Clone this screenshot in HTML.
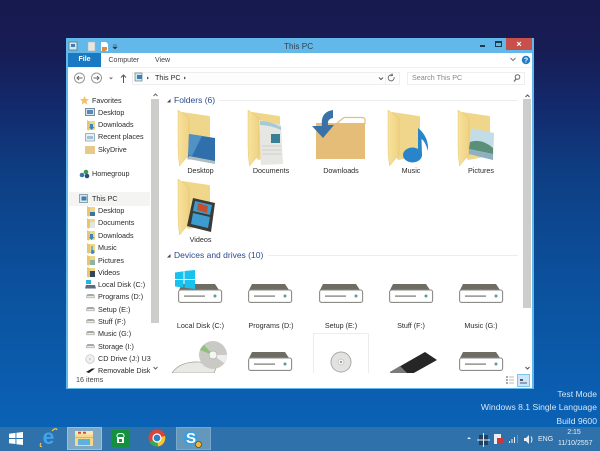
<!DOCTYPE html>
<html><head><meta charset="utf-8"><style>
*{box-sizing:border-box}
html,body{margin:0;padding:0}
body{width:600px;height:450px;overflow:hidden;position:relative;font-family:"Liberation Sans",sans-serif;background:linear-gradient(180deg,#171a4e 0,#171c54 50px,#13286a 100px,#0e3d82 170px,#0c4a94 240px,#0b539f 300px,#0b5cae 380px,#0a62b5 426px)}
.a{position:absolute}
.t{position:absolute;white-space:nowrap;line-height:10px;height:10px}
.s{font-size:7.2px;color:#2a2a2a}
.c{font-size:7.2px;color:#2a2a2a;width:70px;text-align:center}
.h{font-size:8.5px;color:#2b4a8c}
svg{position:absolute;overflow:visible}
</style></head><body>
<svg width="0" height="0" style="position:absolute"><defs>
<linearGradient id="fl" x1="0" y1="0" x2="1" y2="0"><stop offset="0" stop-color="#f8e29c"/><stop offset="1" stop-color="#efd285"/></linearGradient>
<symbol id="fol" viewBox="0 0 38 57" overflow="visible">
<path d="M4 2 L31 6 Q32 6 32 8 L32 46 L10 50 L4 40Z" fill="#f0d68a"/>
<path d="M0 0 L11 8 L11 45 L9 47 L1.500 56 Q0 46 0 36Z" fill="url(#fl)" stroke="#e0be62" stroke-width=".4"/>
</symbol>
<symbol id="drv" viewBox="0 0 44 19" overflow="visible">
<path d="M4 0H37L41 6H1Z" fill="#6f6c64"/>
<rect x=".6" y="6" width="43" height="12.4" rx="2" fill="#fff" stroke="#8b8b88" stroke-width="1.1"/>
<rect x="6" y="11.5" width="21" height="1.2" fill="#77776f"/>
<circle cx="37" cy="12" r="1.5" fill="#5d9c90"/>
</symbol>
<symbol id="nf" viewBox="0 0 10 11" overflow="visible">
<rect x="1" y="1" width="8" height="9" fill="#f0d68a"/><path d="M1 0L4 2V9L2 11 1 9Z" fill="#e9c768"/>
</symbol>
<symbol id="nd" viewBox="0 0 10 6" overflow="visible">
<path d="M1.5 0H8.5L10 2V5H0V2Z" fill="#a9a9a5"/><rect x="1" y="2.5" width="8" height="1.6" fill="#eee"/>
</symbol>
</defs></svg>

<!-- window -->
<div class="a" style="left:66px;top:38px;width:468px;height:351px;background:#62b8e8"></div>
<div class="a" style="left:68px;top:53px;width:464px;height:335px;background:#fff"></div>

<!-- titlebar -->
<svg style="left:69px;top:41px" width="50" height="11">
<rect x="0" y="1" width="8" height="8" fill="#d5e6ee" stroke="#5a7a8a" stroke-width=".8"/><rect x="2" y="3" width="4" height="3" fill="#3d7fb0"/>
<rect x="19" y="1" width="7" height="9" fill="#e6e6e2" stroke="#a9b7bd" stroke-width=".5"/>
<path d="M32 1h5l2 2v7h-7z" fill="#fff"/><path d="M33 6h5v3l-2 1h-3z" fill="#e08a3c"/>
<path d="M44 4h4M44 6l2 2 2-2z" fill="#333" stroke="#333" stroke-width=".6"/>
</svg>
<div class="t" style="left:284px;top:40.5px;font-size:8.2px;color:#31414d;line-height:12px;height:12px">This PC</div>
<div class="a" style="left:480px;top:44.5px;width:5px;height:2px;background:#1d3c50"></div>
<div class="a" style="left:495px;top:41px;width:7px;height:6px;border:1px solid #1d3c50;border-top-width:2px"></div>
<div class="a" style="left:506px;top:38px;width:26px;height:12px;background:#c8504b"></div>
<div class="t" style="left:506px;top:39px;width:26px;text-align:center;color:#fff;font-size:9px;font-weight:bold">×</div>

<!-- ribbon -->
<div class="a" style="left:68px;top:53px;width:33px;height:14px;background:#1979c2"></div>
<div class="t" style="left:68px;top:55px;width:33px;text-align:center;color:#fff;font-size:7px;font-weight:bold">File</div>
<div class="t" style="left:108.5px;top:56px;font-size:7px;color:#444">Computer</div>
<div class="t" style="left:155px;top:56px;font-size:7px;color:#444">View</div>
<svg style="left:508px;top:53px" width="24" height="14">
<path d="M2.500 5l2.500 2.500L7.500 5" fill="none" stroke="#777" stroke-width="1"/>
<circle cx="18" cy="7" r="4.200" fill="#1d7fc8"/><text x="18" y="9.500" font-size="7" fill="#fff" text-anchor="middle" font-weight="bold" font-family="Liberation Sans">?</text>
</svg>
<div class="a" style="left:68px;top:67px;width:464px;height:1px;background:#f0f0f0"></div>

<!-- nav -->
<svg style="left:73px;top:72px" width="60" height="14">
<circle cx="6.500" cy="6" r="5" fill="#fff" stroke="#999"/><path d="M9.500 6H4M6 4L4 6l2 2" fill="none" stroke="#666"/>
<circle cx="23.500" cy="6" r="5" fill="#fff" stroke="#999"/><path d="M20.500 6H26M24 4l2 2-2 2" fill="none" stroke="#666"/>
<path d="M36 5.500h4l-2 2z" fill="#777"/>
<path d="M50.500 11V3M48 5.500l2.500-2.500L53 5.500" fill="none" stroke="#555"/>
</svg>
<div class="a" style="left:132px;top:72px;width:268px;height:13px;border:1px solid #eeeeee;background:#fdfdfd"></div>
<svg style="left:134px;top:72px" width="60" height="12">
<rect x="1" y="1" width="7" height="8" fill="#d9e7ee" stroke="#62808f" stroke-width=".7"/><rect x="3" y="3" width="5" height="4" fill="#3d7fb0"/>
<path d="M13 4.500l2 1.500-2 1.500z" fill="#555"/>
<path d="M50 4.500l2 1.500-2 1.500z" fill="#555"/>
</svg>
<div class="t s" style="left:155px;top:73px">This PC</div>
<svg style="left:375px;top:72px" width="24" height="12">
<path d="M4 5.500l2 2 2-2" fill="none" stroke="#555" stroke-width="1"/>
<path d="M10.500 0V12" stroke="#eee"/>
<path d="M19 5a3 3 0 1 1-1.500-1.800M17 1.500l.5 2-2 .3" fill="none" stroke="#666" stroke-width=".9"/>
</svg>
<div class="a" style="left:407px;top:72px;width:118px;height:13px;border:1px solid #eeeeee;background:#fff"></div>
<div class="t s" style="left:412px;top:73px;color:#888">Search This PC</div>
<svg style="left:512px;top:73px" width="10" height="10"><circle cx="5.500" cy="4" r="2.300" fill="none" stroke="#666"/><path d="M4 6L2 8.500" stroke="#666" stroke-width="1.300"/></svg>

<!-- sidebar -->
<svg style="left:80px;top:96px" width="9" height="9"><path d="M4.500 0l1.300 3 3.200.3-2.400 2.100.7 3.200-2.800-1.700L1.700 8.600l.7-3.200L0 3.300 3.200 3z" fill="#eec36c"/></svg>
<div class="t s" style="left:92px;top:96px">Favorites</div>
<svg style="left:85px;top:108px" width="10" height="9"><rect x=".5" y=".5" width="9" height="7" fill="#d9e5ee" stroke="#7b8c9c"/><rect x="2" y="2" width="6" height="4" fill="#5b88b5"/></svg>
<div class="t s" style="left:98px;top:108px">Desktop</div>
<svg style="left:86px;top:120px" width="10" height="11"><use href="#nf" width="10" height="11"/><path d="M4 4h3v3h1.500L5.500 10 3 7h1z" fill="#3a86c4"/></svg>
<div class="t s" style="left:98px;top:120px">Downloads</div>
<svg style="left:85px;top:132px" width="11" height="10"><rect x=".5" y="1.500" width="9" height="7.500" fill="#e7eff3" stroke="#7c9aa9" stroke-width=".7"/><rect x="2" y="4" width="6" height="3" fill="#9cc2d6"/></svg>
<div class="t s" style="left:98px;top:132px">Recent places</div>
<div class="a" style="left:85px;top:146px;width:10px;height:8px;background:#e7c98c"></div>
<div class="t s" style="left:98px;top:145px">SkyDrive</div>
<svg style="left:79px;top:169px" width="11" height="10"><circle cx="3" cy="6" r="2.300" fill="#3678a8"/><circle cx="7" cy="3" r="2.300" fill="#3f9850"/><circle cx="8" cy="7" r="2.300" fill="#274f7e"/></svg>
<div class="t s" style="left:92px;top:169px">Homegroup</div>
<div class="a" style="left:69px;top:192px;width:81px;height:14px;background:#f4f4f2"></div>
<svg style="left:79px;top:194px" width="11" height="10"><rect x=".5" y=".5" width="8" height="8" fill="#dce8ee" stroke="#678595" stroke-width=".7"/><rect x="2.500" y="2.500" width="5" height="4" fill="#3d7fb0"/></svg>
<div class="t s" style="left:92px;top:194px">This PC</div>

<svg style="left:86px;top:206px" width="10" height="11"><use href="#nf" width="10" height="11"/><rect x="4" y="6" width="5" height="4" fill="#3b73a8"/></svg>
<div class="t s" style="left:98px;top:206px">Desktop</div>
<svg style="left:86px;top:218px" width="10" height="11"><use href="#nf" width="10" height="11"/><rect x="4" y="4" width="5" height="6" fill="#e4e4e0"/></svg>
<div class="t s" style="left:98px;top:218px">Documents</div>
<svg style="left:86px;top:230px" width="10" height="11"><use href="#nf" width="10" height="11"/><path d="M4 4h3v3h1.500L5.500 10 3 7h1z" fill="#3a86c4"/></svg>
<div class="t s" style="left:98px;top:231px">Downloads</div>
<svg style="left:86px;top:243px" width="10" height="11"><use href="#nf" width="10" height="11"/><path d="M5 9a1.500 1.500 0 1 0 1-1.500V3" fill="#2d8ed0" stroke="#2d8ed0"/></svg>
<div class="t s" style="left:98px;top:243px">Music</div>
<svg style="left:86px;top:255px" width="10" height="11"><use href="#nf" width="10" height="11"/><rect x="4" y="5" width="5" height="5" fill="#8fb4a4"/></svg>
<div class="t s" style="left:98px;top:256px">Pictures</div>
<svg style="left:86px;top:267px" width="10" height="11"><use href="#nf" width="10" height="11"/><rect x="4" y="4" width="5" height="6" fill="#33475a"/></svg>
<div class="t s" style="left:98px;top:268px">Videos</div>
<svg style="left:85px;top:279px" width="11" height="11"><path d="M1 1h5v4H1z" fill="#24b4dc"/><path d="M1 6h9l1 3.500H0z" fill="#5b6d80"/></svg>
<div class="t s" style="left:98px;top:280px">Local Disk (C:)</div>
<svg style="left:86px;top:294px" width="9" height="6"><use href="#nd" width="9" height="5"/></svg>
<div class="t s" style="left:98px;top:292px">Programs (D:)</div>
<svg style="left:86px;top:307px" width="9" height="6"><use href="#nd" width="9" height="5"/></svg>
<div class="t s" style="left:98px;top:305px">Setup (E:)</div>
<svg style="left:86px;top:319px" width="9" height="6"><use href="#nd" width="9" height="5"/></svg>
<div class="t s" style="left:98px;top:317px">Stuff (F:)</div>
<svg style="left:86px;top:331px" width="9" height="6"><use href="#nd" width="9" height="5"/></svg>
<div class="t s" style="left:98px;top:329px">Music (G:)</div>
<svg style="left:86px;top:344px" width="9" height="6"><use href="#nd" width="9" height="5"/></svg>
<div class="t s" style="left:98px;top:342px">Storage (I:)</div>
<svg style="left:85px;top:354px" width="10" height="10"><circle cx="5" cy="5" r="4.300" fill="#efefef" stroke="#bbb" stroke-width=".6"/><circle cx="5" cy="5" r="1" fill="#ccc"/></svg>
<div class="a" style="left:98px;top:354px;width:53px;height:11px;overflow:hidden"><div class="t s" style="left:0;top:0">CD Drive (J:) U3 System</div></div>
<div class="a" style="left:68px;top:366px;width:83px;height:7px;overflow:hidden">
<svg style="left:18px;top:1px" width="9" height="6"><path d="M0 5L6 1.500h3L3 6z" fill="#222"/></svg>
<div class="t s" style="left:30px;top:0">Removable Disk (K:)</div></div>

<!-- side scrollbar -->
<svg style="left:151px;top:91px" width="9" height="8"><path d="M2.500 5l2-2 2 2" fill="none" stroke="#666" stroke-width="1"/></svg>
<div class="a" style="left:151px;top:99px;width:8px;height:224px;background:#cdcdcb"></div>
<svg style="left:151px;top:365px" width="9" height="7"><path d="M2.500 2l2 2 2-2" fill="none" stroke="#666" stroke-width="1"/></svg>

<!-- main -->
<svg style="left:166px;top:98px" width="6" height="6"><path d="M4.500 1V4.500H1z" fill="#444"/></svg>
<div class="t h" style="left:174px;top:95px">Folders (6)</div>
<div class="a" style="left:219px;top:100px;width:299px;height:1px;background:#ecedef"></div>

<!-- Desktop folder -->
<svg style="left:178px;top:110px" width="38" height="57"><use href="#fol" width="38" height="57"/><path d="M11 24L37 28V53L10 48Z" fill="#2f6fab"/><path d="M11 24L24 26 14 46 10.500 45Z" fill="#4f92c4"/><path d="M11 46L37 51V54L10 49Z" fill="#aebdc2"/></svg>
<div class="t c" style="left:165.500px;top:166px">Desktop</div>
<!-- Documents -->
<svg style="left:248px;top:110px" width="38" height="57"><use href="#fol" width="38" height="57"/><path d="M11 10L33 15L35 54L13 55Z" fill="#e6e6e3"/><path d="M12 11Q22 11 33 17V20Q22 15 12 15Z" fill="#a6c9d8"/><rect x="23" y="24" width="9" height="9" fill="#3b7f97"/><path d="M14 36h19M14 40h19M14 44h19" stroke="#cfcfcb"/></svg>
<div class="t c" style="left:236px;top:166px">Documents</div>
<!-- Downloads -->
<svg style="left:312px;top:110px" width="56" height="50">
<path d="M24 14L32 7.500H50Q53 7.500 53 10V14" fill="#fff" stroke="#e3c07e" stroke-width="1.200"/>
<rect x="4" y="13" width="49" height="36" fill="#e6bd78"/>
<path d="M21 0Q8 2 10 16L0 16 11 28 22 15 16 15Q15 9 21 8Z" fill="#3a72a8"/>
</svg>
<div class="t c" style="left:306px;top:166px">Downloads</div>
<!-- Music -->
<svg style="left:388px;top:110px" width="42" height="57"><use href="#fol" width="38" height="57"/>
<ellipse cx="24.500" cy="45" rx="9.500" ry="7.500" fill="#2885c9"/><path d="M30 45L30 18Q41 27 40 41Q37 31 33.500 29L34 46Z" fill="#2885c9"/></svg>
<div class="t c" style="left:376px;top:166px">Music</div>
<!-- Pictures -->
<svg style="left:458px;top:110px" width="42" height="57"><use href="#fol" width="38" height="57"/>
<path d="M13 18L36 23L35 50L11 44Z" fill="#c2dce8"/><path d="M12 32Q24 28 35 38L35 44 11 39Z" fill="#5a8f78"/><path d="M11 39L35 44V50L11 44Z" fill="#8fb0c0"/></svg>
<div class="t c" style="left:446px;top:166px">Pictures</div>
<!-- Videos -->
<svg style="left:178px;top:179px" width="42" height="57"><use href="#fol" width="38" height="57"/>
<path d="M15 19L37 24L33 53L9 47Z" fill="#3a3a36"/><path d="M17 22L34 26L32 36L15 32Z" fill="#3d9ccf"/><path d="M20 24L30 27 29 34 19 31Z" fill="#c0502f"/><path d="M15 34L32 38L30 49L13 45Z" fill="#3d9ccf"/></svg>
<div class="t c" style="left:165.500px;top:235px">Videos</div>

<svg style="left:166px;top:252.500px" width="6" height="6"><path d="M4.500 1V4.500H1z" fill="#444"/></svg>
<div class="t h" style="left:174px;top:250px">Devices and drives (10)</div>
<div class="a" style="left:268px;top:255px;width:250px;height:1px;background:#ecedef"></div>

<svg style="left:178px;top:284px" width="44" height="19"><use href="#drv" width="44" height="19"/></svg>
<svg style="left:248px;top:284px" width="44" height="19"><use href="#drv" width="44" height="19"/></svg>
<svg style="left:319px;top:284px" width="44" height="19"><use href="#drv" width="44" height="19"/></svg>
<svg style="left:389px;top:284px" width="44" height="19"><use href="#drv" width="44" height="19"/></svg>
<svg style="left:459px;top:284px" width="44" height="19"><use href="#drv" width="44" height="19"/></svg>
<svg style="left:175px;top:270px" width="21" height="19"><path d="M0 2.500L8.500 1.200V9H0ZM9.500 1L20 0V9H9.500ZM0 10H8.500V17.500L0 16.500ZM9.500 10H20V19L9.500 17.700Z" fill="#18c2ee"/></svg>

<div class="t c" style="left:165.500px;top:321px">Local Disk (C:)</div>
<div class="t c" style="left:236px;top:321px">Programs (D:)</div>
<div class="t c" style="left:306px;top:321px">Setup (E:)</div>
<div class="t c" style="left:376px;top:321px">Stuff (F:)</div>
<div class="t c" style="left:446px;top:321px">Music (G:)</div>

<!-- second row clip -->
<div class="a" style="left:165px;top:333px;width:355px;height:40px;overflow:hidden">
<svg style="left:7px;top:0" width="56" height="40">
<path d="M0 40Q8 28 28 29L44 35 42 40H0Z" fill="#e8e8e4" stroke="#8f8f8b" stroke-width=".6"/>
<circle cx="41" cy="22" r="14" fill="#c9c9c5"/><path d="M41 22L28 17A14 14 0 0 1 32 12Z" fill="#8dc07c"/><path d="M41 22L52 30A14 14 0 0 0 55 22Z" fill="#eee"/><circle cx="41" cy="22" r="4" fill="#f5f5f3" stroke="#999" stroke-width=".5"/>
</svg>
<svg style="left:83px;top:19px" width="44" height="19"><use href="#drv" width="44" height="19"/></svg>
<div class="a" style="left:148px;top:0;width:56px;height:50px;border:1px solid #ececec"></div>
<svg style="left:165px;top:18px" width="22" height="22"><circle cx="11" cy="11" r="10" fill="#e2e2e0" stroke="#a9a9a6"/><circle cx="11" cy="11" r="3" fill="#f4f4f2" stroke="#aaa" stroke-width=".5"/><circle cx="11" cy="11" r="1" fill="#888"/></svg>
<svg style="left:225px;top:19px" width="47" height="24"><path d="M0 20L35 0 47 8 22 22 0 22Z" fill="#262626"/><path d="M0 20L10 14 18 22H0Z" fill="#7a7a78"/></svg>
<svg style="left:294px;top:19px" width="44" height="19"><use href="#drv" width="44" height="19"/></svg>
</div>

<!-- main scrollbar -->
<svg style="left:523px;top:92px" width="9" height="8"><path d="M2.500 5l2-2 2 2" fill="none" stroke="#555" stroke-width="1"/></svg>
<div class="a" style="left:523px;top:99px;width:8px;height:209px;background:#cdcdcb"></div>
<svg style="left:523px;top:365px" width="9" height="7"><path d="M2.500 2l2 2 2-2" fill="none" stroke="#555" stroke-width="1"/></svg>

<!-- status -->
<div class="t s" style="left:76px;top:375px;color:#444">16 items</div>
<svg style="left:505px;top:375px" width="10" height="10"><path d="M1 1h2v2H1zM1 4h2v2H1zM1 7h2v2H1z" fill="#aaa"/><path d="M4 2h5M4 5h5M4 8h5" stroke="#bbb"/></svg>
<div class="a" style="left:517px;top:374px;width:13px;height:13px;background:#cce8f8;border:1px solid #7fc4ea"></div>
<svg style="left:519px;top:376px" width="9" height="9"><path d="M1 3h3v2H1z" fill="#557"/><path d="M1 7h7" stroke="#557"/></svg>

<!-- watermark -->
<div class="t" style="right:3px;top:389px;font-size:8.600px;color:#d5e6f5;line-height:11px;height:11px">Test Mode</div>
<div class="t" style="right:3px;top:402px;font-size:8.600px;color:#d5e6f5;line-height:11px;height:11px">Windows 8.1 Single Language</div>
<div class="t" style="right:3px;top:416px;font-size:8.600px;color:#d5e6f5;line-height:11px;height:11px">Build 9600</div>

<!-- taskbar -->
<div class="a" style="left:0;top:426.500px;width:600px;height:24px;background:#2f72ab"></div>
<svg style="left:9px;top:432px" width="15" height="13"><path d="M0 1.800L6.500 .9V6H0ZM7.400 .8L14 0V6H7.400ZM0 7H6.500V12L0 11.200ZM7.400 7H14V13L7.400 12.200Z" fill="#fff"/></svg>
<svg style="left:39px;top:428px" width="20" height="20"><text x="9.500" y="16" font-size="21" font-weight="bold" font-family="Liberation Sans" fill="#3fa6ec" text-anchor="middle">e</text><path d="M2 15Q0 19 3 18.500M13 3Q17 -1 18 2" fill="none" stroke="#f3c744" stroke-width="1.200"/></svg>
<div class="a" style="left:67px;top:427px;width:35px;height:23px;background:#7ea8c6;border:1px solid #9dbdd4"></div>
<svg style="left:75px;top:431px" width="19" height="16"><path d="M0 0H18V15H0Z" fill="#f4d98c"/><rect x="0" y="0" width="18" height="3.500" fill="#f6e7ba"/><path d="M3 .8h3v2H3zM8 .8h3v2H8z" fill="#d24b3f"/><rect x="3" y="8" width="12" height="6" fill="#5fb0da"/><rect x="0" y="6" width="18" height="1" fill="#d9b765"/></svg>
<div class="a" style="left:112px;top:430px;width:17px;height:17px;background:#14903f"></div>
<svg style="left:112px;top:430px" width="17" height="17"><path d="M5 7V5.500Q5 3.500 8.500 3.500T12 5.500V7" fill="none" stroke="#fff"/><rect x="5" y="7" width="7" height="6" fill="#fff"/><rect x="7" y="9" width="3" height="3" fill="#14903f"/></svg>
<svg style="left:148px;top:429px" width="18" height="18"><circle cx="9" cy="9" r="8.500" fill="#dc4437"/><path d="M9 9L1.500 13A8.500 8.500 0 0 0 10 17.500Z" fill="#3aa655"/><path d="M9 9l8-2a8.500 8.500 0 0 1-7 10.500z" fill="#f6c62d"/><circle cx="9" cy="9" r="4" fill="#2e80c9" stroke="#fff" stroke-width="1.200"/></svg>
<div class="a" style="left:176px;top:427px;width:35px;height:23px;background:#6497bc;border:1px solid #7ba8c8"></div>
<svg style="left:183px;top:430px" width="16" height="16"><circle cx="7.500" cy="8" r="7" fill="#3a9fe0"/></svg>
<div class="t" style="left:186px;top:430px;font-size:15px;font-weight:bold;color:#fff;line-height:17px;height:17px">S</div>
<svg style="left:195px;top:441px" width="8" height="8"><circle cx="3.500" cy="3.500" r="3" fill="#f2b83b" stroke="#3a3a2a" stroke-width=".6"/></svg>

<!-- tray -->
<svg style="left:466px;top:433px" width="120" height="14">
<path d="M1 6l2-2 2 2z" fill="#e8eef4"/>
<rect x="13" y="2" width="9" height="10" fill="#23405e"/><path d="M17.500 0V14M11 7H24" stroke="#e9eef3"/>
<rect x="28" y="1" width="7" height="10" fill="#e8eef4"/><rect x="31" y="5" width="6" height="6" fill="#c83a3a"/>
<path d="M43 10h1V8h-1zM45.500 10h1V6h-1zM48 10h1V4h-1z" fill="#f0f4f8"/><path d="M51 10h1V2h-1z" fill="#6d93b4"/>
<path d="M58 5h2l3-3v9l-3-3h-2z" fill="#e8eef4"/><path d="M65 3.500Q67 6.500 65 9.500" fill="none" stroke="#e8eef4"/>
</svg>
<div class="t" style="left:538px;top:434.500px;font-size:7px;color:#e8f0f7">ENG</div>
<div class="t" style="left:556px;top:428px;width:36px;text-align:center;font-size:7px;color:#e8f0f7">2:15</div>
<div class="t" style="left:558px;top:438.500px;font-size:7px;color:#e8f0f7">11/10/2557</div>
</body></html>
